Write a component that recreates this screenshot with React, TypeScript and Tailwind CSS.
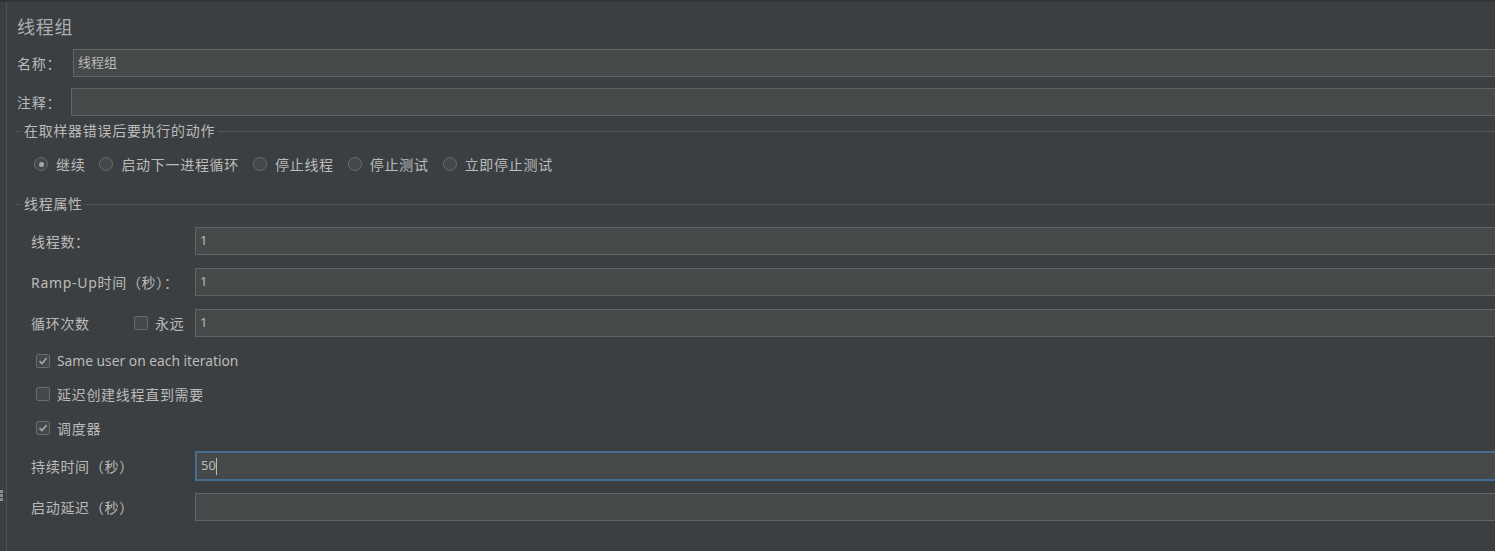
import React from "react";

const font = { fontFamily: '"Noto Sans", "Noto Sans CJK SC", sans-serif' };

const Field: React.FC<{ value?: string; focused?: boolean }> = ({ value, focused }) => (
  <div
    className={
      "flex-1 min-w-0 -mr-[4px] flex items-center pl-[4px] bg-[#45494a] text-[13px] tracking-normal text-[#bbbbbb] " +
      (focused ? "h-[30px] border-2 border-[#466d94]" : "h-[28px] border border-[#646464]")
    }
  >
    {value && <span>{value}</span>}
    {focused && <span className="w-px h-[17px] bg-[#bbbbbb]" />}
  </div>
);

const Legend: React.FC<{ title: string; className?: string }> = ({ title, className }) => (
  <div className={"flex items-center h-[18px] " + (className ?? "")}>
    <div className="w-[5px] h-px bg-[#555759] ml-[-1px]" />
    <span className="px-[3px] text-[14px] leading-[18px]">{title}</span>
    <div className="flex-1 h-px bg-[#555759]" />
  </div>
);

const Radio: React.FC<{ label: string; checked?: boolean }> = ({ label, checked }) => (
  <div className="flex items-center gap-[8px] mr-[14px]">
    <div className="w-[14px] h-[14px] rounded-full border border-[#6b6b6b] bg-[#43494a] flex items-center justify-center">
      {checked && <div className="w-[5px] h-[5px] rounded-full bg-[#a8a8a8]" />}
    </div>
    <span>{label}</span>
  </div>
);

const Check: React.FC<{ checked?: boolean }> = ({ checked }) => (
  <div className="w-[14px] h-[14px] shrink-0 rounded-[2px] border border-[#6b6b6b] bg-[#43494a] flex items-center justify-center">
    {checked && (
      <svg width="10" height="10" viewBox="0 0 10 10">
        <path d="M1.5 5.2 L4 7.6 L8.6 2" fill="none" stroke="#a8a8a8" strokeWidth="1.6" />
      </svg>
    )}
  </div>
);

const CheckRow: React.FC<{ label: string; checked?: boolean; latin?: boolean; className: string }> = ({
  label,
  checked,
  latin,
  className,
}) => (
  <div className={"flex items-center gap-[7px] h-[20px] pl-[19px] " + className}>
    <Check checked={checked} />
    <span className={latin ? "text-[13.8px] tracking-normal" : "text-[14px]"}>{label}</span>
  </div>
);

const Row: React.FC<{ label: string; value?: string; focused?: boolean; className: string }> = ({
  label,
  value,
  focused,
  className,
}) => (
  <div className={"flex items-center pl-[14px] " + className}>
    <span className="w-[164px] shrink-0 text-[14px]">{label}</span>
    <Field value={value} focused={focused} />
  </div>
);

export default function App() {
  return (
    <div
      className="w-full h-[551px] overflow-hidden bg-[#3c3f41] text-[#bbbbbb] border-t-2 border-[#313335] flex relative tracking-[0.7px]"
      style={font}
    >
      <div className="w-[7px] border-r border-[#4e5255] shrink-0" />
      <div className="absolute left-0 top-[488px] flex flex-col gap-[1px]">
        <div className="w-[3px] h-[3px] bg-[#8a8d90]" />
        <div className="w-[3px] h-[3px] bg-[#8a8d90]" />
        <div className="w-[3px] h-[3px] bg-[#8a8d90]" />
      </div>

      <div className="flex-1 flex flex-col pl-[10px] text-[14px]">
        <h1 className="mt-[13px] text-[18px] leading-[24px] text-[#a9aeb3]">线程组</h1>

        <div className="mt-[10px] flex items-center">
          <span className="w-[56px] shrink-0">名称：</span>
          <Field value="线程组" />
        </div>
        <div className="mt-[11px] flex items-center">
          <span className="w-[54px] shrink-0">注释：</span>
          <Field />
        </div>

        <Legend title="在取样器错误后要执行的动作" className="mt-[6px]" />
        <div className="mt-[15px] h-[18px] flex items-center pl-[17px]">
          <Radio label="继续" checked />
          <Radio label="启动下一进程循环" />
          <Radio label="停止线程" />
          <Radio label="停止测试" />
          <Radio label="立即停止测试" />
        </div>

        <Legend title="线程属性" className="mt-[22px]" />
        <Row label="线程数：" value="1" className="mt-[14px]" />
        <Row label="Ramp-Up时间（秒）：" value="1" className="mt-[13px]" />
        <div className="mt-[13px] flex items-center pl-[14px]">
          <div className="w-[164px] shrink-0 flex items-center">
            <span className="w-[103px] shrink-0">循环次数</span>
            <Check />
            <span className="ml-[7px]">永远</span>
          </div>
          <Field value="1" />
        </div>

        <CheckRow label="Same user on each iteration" checked latin className="mt-[14px]" />
        <CheckRow label="延迟创建线程直到需要" className="mt-[13px]" />
        <CheckRow label="调度器" checked className="mt-[14px]" />

        <Row label="持续时间（秒）" value="50" focused className="mt-[13px]" />
        <Row label="启动延迟（秒）" className="mt-[12px]" />
      </div>
    </div>
  );
}
